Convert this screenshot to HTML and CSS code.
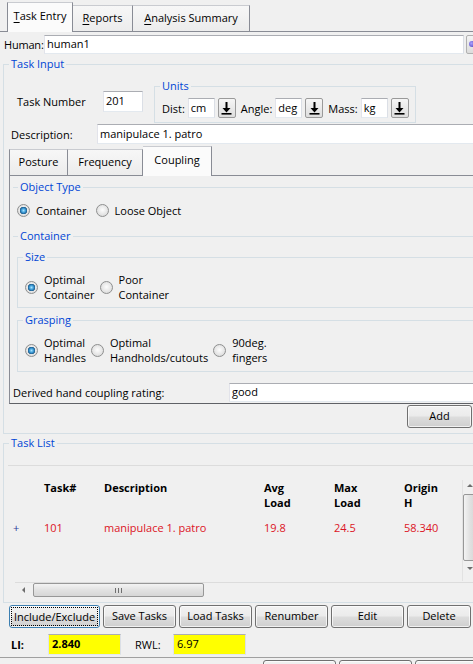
FILE: index.html
```html
<!DOCTYPE html>
<html>
<head>
<meta charset="utf-8">
<link rel="stylesheet" href="styles.css">
</head>
<body>
<div class="win">
  <div class="tabbar">
    <div class="tab sel t1"><u>T</u>ask Entry</div>
    <div class="tab t2"><u>R</u>eports</div>
    <div class="tab t3"><u>A</u>nalysis Summary</div>
  </div>

  <div class="human-row">
    <span class="human-lbl">Human:</span>
    <div class="field human-field">human1</div>
    <div class="hbtn"><span class="hdot"></span></div>
  </div>

  <fieldset class="tb task-input">
    <legend>Task Input</legend>
    <div class="tn-row">
      <span class="tn-lbl">Task Number</span>
      <div class="field tn-field">201</div>
      <fieldset class="tb units">
        <legend>Units</legend>
        <div class="units-row">
          <span class="u-lbl">Dist:</span>
          <div class="field u-field">cm</div>
          <div class="dd"><svg width="11" height="14" viewBox="0 0 11 14"><path d="M4.5 1h2v6h3l-4 4.5-4-4.5h3z" fill="#000"/><rect x="0.5" y="12" width="10" height="1.6" fill="#000"/></svg></div>
          <span class="u-lbl">Angle:</span>
          <div class="field u-field">deg</div>
          <div class="dd"><svg width="11" height="14" viewBox="0 0 11 14"><path d="M4.5 1h2v6h3l-4 4.5-4-4.5h3z" fill="#000"/><rect x="0.5" y="12" width="10" height="1.6" fill="#000"/></svg></div>
          <span class="u-lbl">Mass:</span>
          <div class="field u-field">kg</div>
          <div class="dd"><svg width="11" height="14" viewBox="0 0 11 14"><path d="M4.5 1h2v6h3l-4 4.5-4-4.5h3z" fill="#000"/><rect x="0.5" y="12" width="10" height="1.6" fill="#000"/></svg></div>
        </div>
      </fieldset>
    </div>

    <div class="desc-row">
      <span class="desc-lbl">Description:</span>
      <div class="field desc-field">manipulace 1. patro</div>
    </div>

    <div class="itabs">
      <div class="itab it1">Posture</div>
      <div class="itab it2">Frequency</div>
      <div class="itab sel it3">Coupling</div>
    </div>

    <div class="ipanel">
      <fieldset class="tb objtype">
        <legend>Object Type</legend>
        <div class="radio-row r-obj">
          <span class="radio on"></span><span class="rtext">Container</span>
          <span class="radio"></span><span class="rtext">Loose Object</span>
        </div>
      </fieldset>

      <fieldset class="tb container">
        <legend>Container</legend>
        <fieldset class="tb sub size">
          <legend>Size</legend>
          <div class="radio-row r2">
            <span class="radio on"></span><span class="rtext two">Optimal<br>Container</span>
            <span class="radio"></span><span class="rtext two">Poor<br>Container</span>
          </div>
        </fieldset>
        <fieldset class="tb sub grasp">
          <legend>Grasping</legend>
          <div class="radio-row r2">
            <span class="radio on"></span><span class="rtext two">Optimal<br>Handles</span>
            <span class="radio"></span><span class="rtext two">Optimal<br>Handholds/cutouts</span>
            <span class="radio"></span><span class="rtext two">90deg.<br>fingers</span>
          </div>
        </fieldset>
      </fieldset>

      <div class="derived-row">
        <span class="derived-lbl">Derived hand coupling rating:</span>
        <div class="field derived-field">good</div>
      </div>
    </div>

    <div class="add-row"><div class="btn add">Add</div></div>
  </fieldset>

  <fieldset class="tb task-list">
    <legend>Task List</legend>
    <div class="tview">
      <div class="tgrid">
        <div class="trow thead">
          <span class="c0"></span>
          <span class="c1">Task#</span>
          <span class="c2">Description</span>
          <span class="c3">Avg<br>Load</span>
          <span class="c4">Max<br>Load</span>
          <span class="c5">Origin<br>H</span>
        </div>
        <div class="trow tdata">
          <span class="c0 plus">+</span>
          <span class="c1">101</span>
          <span class="c2">manipulace 1. patro</span>
          <span class="c3">19.8</span>
          <span class="c4">24.5</span>
          <span class="c5">58.340</span>
        </div>
      </div>
      <div class="vscroll">
        <span class="arr up"></span>
        <span class="vthumb"></span>
        <span class="arr down"></span>
      </div>
    </div>
    <div class="hscroll">
      <span class="arr left"></span>
      <span class="hthumb"><span class="grip"></span></span>
      <span class="hspace"></span>
      <span class="arr right"></span>
    </div>
  </fieldset>

  <div class="btn-row">
    <div class="btn b-inc"><span class="focusbox">Include/Exclude</span></div>
    <div class="btn b-std">Save Tasks</div>
    <div class="btn b-std">Load Tasks</div>
    <div class="btn b-std">Renumber</div>
    <div class="btn b-std">Edit</div>
    <div class="btn b-del">Delete</div>
  </div>

  <div class="li-row">
    <span class="li-lbl">LI:</span>
    <div class="yfield bold">2.840</div>
    <span class="rwl-lbl">RWL:</span>
    <div class="yfield">6.97</div>
  </div>

  <div class="bottom-row">
    <div class="btn b-bot"></div>
    <div class="btn b-bot"></div>
    <div class="btn b-bot wide"></div>
  </div>
</div>
</body>
</html>
```

FILE: styles.css
```css
* { box-sizing: border-box; }
html, body { margin: 0; padding: 0; }
body {
  width: 473px;
  height: 664px;
  overflow: hidden;
  background: #f0f0f0;
  font-family: "Open Sans", "DejaVu Sans", sans-serif;
  font-size: 11px;
  color: #000;
}
.win { width: 478px; }
u { text-decoration: underline; text-underline-offset: 2px; }

/* top tabs */
.tabbar {
  height: 32px;
  display: flex;
  align-items: flex-end;
  padding-left: 7px;
  border-bottom: 1px solid #898c95;
}
.tab {
  height: 26px;
  line-height: 24px;
  border: 1px solid #898c95;
  border-top-color: #c9cbd0;
  border-bottom: none;
  border-left: none;
  background: linear-gradient(#f7f7f7, #ececec);
  text-align: center;
}
.tab.sel {
  height: 30px;
  line-height: 26px;
  border-left: 1px solid #898c95;
  background: #fbfbfb;
  margin-bottom: -1px;
  position: relative;
}
.t1 { width: 66px; }
.t2 { width: 60px; }
.t3 { width: 117px; }

/* fields */
.field {
  background: #fff;
  border: 1px solid;
  border-color: #abadb3 #dbdfe6 #e3e9ef #e2e3ea;
  padding-left: 2px;
  white-space: nowrap;
  overflow: hidden;
}

.human-row {
  margin-top: 3px;
  height: 19px;
  display: flex;
  align-items: center;
}
.human-lbl { width: 44px; flex: none; padding-left: 4px; white-space: nowrap; letter-spacing: -0.2px; }
.human-field { width: 420px; flex: none; height: 19px; line-height: 16px; }
.hbtn {
  width: 12px;
  flex: none;
  height: 19px;
  margin-left: 2px;
  border: 1px solid #b0b0b0;
  border-radius: 2px;
  background: linear-gradient(#f4f4f4, #dcdcdc);
}
.hdot {
  display: block;
  width: 6px; height: 6px;
  margin: 5px 0 0 2px;
  border-radius: 50%;
  background: radial-gradient(circle at 40% 40%, #a9a0ff, #4e3fb8);
}

/* titled borders */
fieldset.tb {
  border: 1px solid #d5dfe5;
  margin: 0;
  padding: 0;
  min-width: 0;
}
fieldset.tb > legend {
  color: #0046d5;
  padding: 0 2px;
  margin-left: 5px;
  line-height: 14px;
  font-size: 11px;
}

.task-input {
  margin: 3px 0 0 3px !important;
  width: 475px;
  border-right: none !important;
  padding-bottom: 5px !important;
}

.tn-row {
  display: flex;
  align-items: center;
  margin-top: 8px;
  height: 44px;
}
.tn-lbl { width: 99px; padding-left: 13px; }
.tn-field { width: 40px; height: 21px; line-height: 18px; }
.units {
  margin-left: 11px !important;
  width: 262px;
  height: 44px;
}
.units-row {
  display: flex;
  align-items: center;
  padding: 5px 0 0 7px;
}
.u-lbl { margin-right: 3px; }
.u-field { width: 27px; height: 20px; line-height: 17px; margin-right: 3px; }
.dd {
  width: 18px;
  height: 20px;
  border: 1px solid #9a9a9a;
  border-radius: 2px;
  background: linear-gradient(#f6f6f6, #dedede);
  display: flex;
  align-items: center;
  justify-content: center;
  margin-right: 5px;
}

.desc-row {
  display: flex;
  align-items: center;
  margin-top: 1px;
  height: 20px;
}
.desc-lbl { width: 93px; padding-left: 7px; }
.desc-field { flex: 1; height: 20px; line-height: 17px; }

/* inner tabs */
.itabs {
  display: flex;
  align-items: flex-end;
  height: 29px;
  margin-top: 2px;
  padding-left: 5px;
}
.itab {
  height: 26px;
  line-height: 24px;
  border: 1px solid #898c95;
  border-top-color: #c9cbd0;
  border-left: none;
  border-bottom: none;
  background: linear-gradient(#f7f7f7, #ececec);
  text-align: center;
}
.itab.sel {
  height: 30px;
  line-height: 25px;
  background: #fbfbfb;
  margin-bottom: -1px;
  position: relative;
}
.it1 { width: 59px; border-left: 1px solid #898c95; }
.it2 { width: 75px; }
.it3 { width: 69px; }

.ipanel {
  margin-left: 5px;
  border-top: 1px solid #898c95;
  border-left: 1px solid #898c95;
  border-bottom: 1px solid #5f6166;
  height: 229px;
  padding-left: 3px;
  padding-top: 4px;
}

.objtype {
  height: 49px;
  border-left: none !important;
  border-right: none !important;
  border-bottom: none !important;
}
.radio-row {
  display: flex;
  align-items: center;
}
.r-obj { padding: 9px 0 0 4px; }
.radio {
  width: 13px;
  height: 13px;
  border-radius: 50%;
  border: 1px solid #8e8f8f;
  background: radial-gradient(circle at 50% 45%, #fdfdfd 0, #e6e6e6 55%, #d2d2d2 100%);
  flex: none;
  margin-right: 6px;
}
.radio.on {
  background:
    radial-gradient(circle at 50% 50%, #a6e4ff 0, #3f9dd8 2px, #1d5c8c 3.5px, rgba(0,0,0,0) 4px),
    radial-gradient(circle at 50% 45%, #fdfdfd 0, #e6e6e6 55%, #d2d2d2 100%);
}
.rtext { margin-right: 9px; }
.rtext.two { line-height: 15px; }

.container {
  height: 146px;
  border-left: none !important;
  border-right: none !important;
  border-bottom: none !important;
}
.sub {
  margin-left: 4px !important;
  border-right: none !important;
}
.size { height: 58px; margin-top: 7px !important; }
.grasp { height: 59px; margin-top: 5px !important; }
.r2 { padding: 8px 0 0 7px; }
.r2 .rtext { margin-right: 0; }
.r2 .rtext + .radio { margin-left: 5px; }

.derived-row {
  display: flex;
  align-items: center;
  height: 19px;
  margin-top: 8px;
}
.derived-lbl { width: 216px; }
.derived-field { flex: 1; height: 19px; line-height: 16px; }

.add-row {
  display: flex;
  padding-top: 1px;
  padding-left: 403px;
}

/* buttons */
.btn {
  height: 23px;
  border: 1px solid #707070;
  border-radius: 3px;
  background: linear-gradient(#f2f2f2 0, #ebebeb 48%, #dddddd 52%, #cfcfcf 100%);
  text-align: center;
  line-height: 20px;
  white-space: nowrap;
  box-shadow: inset 0 0 0 1px rgba(255,255,255,0.7);
}
.add { width: 65px; flex: none; }

/* task list */
.task-list {
  margin: 2px 0 0 3px !important;
  width: 475px;
  border-right: none !important;
  height: 167px;
}
.tview {
  margin-top: 15px;
  margin-left: 4px;
  border-top: 1px solid #dcdcdc;
  height: 117px;
  display: flex;
}
.tgrid { flex: 1; padding-top: 14px; }
.trow { display: flex; }
.trow span { flex: none; line-height: 15px; }
.thead { font-weight: bold; }
.tdata { color: #dc1425; margin-top: 10px; }
.c0 { width: 36px; }
.c1 { width: 60px; }
.c2 { width: 160px; }
.c3 { width: 70px; }
.c4 { width: 70px; }
.c5 { width: 50px; }
.plus { color: #2b3a9a; padding-left: 5px; }

.vscroll {
  width: 14px;
  margin-top: 14px;
  height: 101px;
  margin-right: 2px;
  border-left: 1px solid #e2e2e2;
  background: #f0f0f0;
  display: flex;
  flex-direction: column;
  align-items: center;
}
.arr { display: block; width: 0; height: 0; border: 3px solid transparent; }
.arr.up { border-bottom: 3px solid #6d6d6d; border-top: none; margin-top: 4px; }
.arr.down { border-top: 3px solid #6d6d6d; border-bottom: none; margin-top: 6px; }
.vthumb {
  display: block;
  width: 13px;
  height: 67px;
  margin-top: 7px;
  border: 1px solid #979797;
  border-radius: 2px;
  background: linear-gradient(90deg, #f3f3f3, #e2e2e2 50%, #d6d6d6);
}
.hscroll {
  margin-left: 11px;
  height: 15px;
  display: flex;
  align-items: center;
  border-top: 1px solid #dcdcdc;
}
.arr.left { border-right: 3px solid #6d6d6d; border-left: none; margin-left: 7px; }
.arr.right { border-left: 3px solid #222; border-right: none; }
.hthumb {
  display: flex;
  align-items: center;
  justify-content: center;
  width: 171px;
  height: 14px;
  margin-left: 8px;
  border: 1px solid #979797;
  border-radius: 2px;
  background: linear-gradient(#f3f3f3, #e2e2e2 50%, #d6d6d6);
}
.grip {
  display: block;
  width: 7px;
  height: 5px;
  background: repeating-linear-gradient(90deg, #6f6f6f 0 1px, transparent 1px 3px);
}
.hspace { flex: 1; }

/* bottom buttons */
.btn-row {
  display: flex;
  gap: 3px;
  margin-top: 2px;
  padding-left: 9px;
}
.b-inc { width: 91px; border-color: #3c7fb1; padding: 1px; }
.focusbox {
  display: block;
  height: 19px;
  line-height: 17px;
  border: 1px dotted #000;
}
.b-std { width: 73px; }
.b-del { width: 64px; }

.li-row {
  display: flex;
  align-items: center;
  height: 21px;
  margin-top: 6px;
}
.li-lbl { font-weight: bold; width: 48px; padding-left: 11px; }
.rwl-lbl { width: 52px; padding-left: 14px; }
.yfield {
  width: 73px;
  height: 21px;
  background: #ffff00;
  border: 1px solid;
  border-color: #abadb3 #dbdfe6 #e3e9ef #e2e3ea;
  padding-left: 3px;
  line-height: 18px;
}
.bold { font-weight: bold; }

.bottom-row {
  margin-top: 2px;
  border-top: 1px solid #a0a0a0;
  padding-top: 2px;
  padding-left: 263px;
  display: flex;
  gap: 3px;
}
.b-bot { width: 73px; }
.b-bot.wide { width: 62px; }
```
